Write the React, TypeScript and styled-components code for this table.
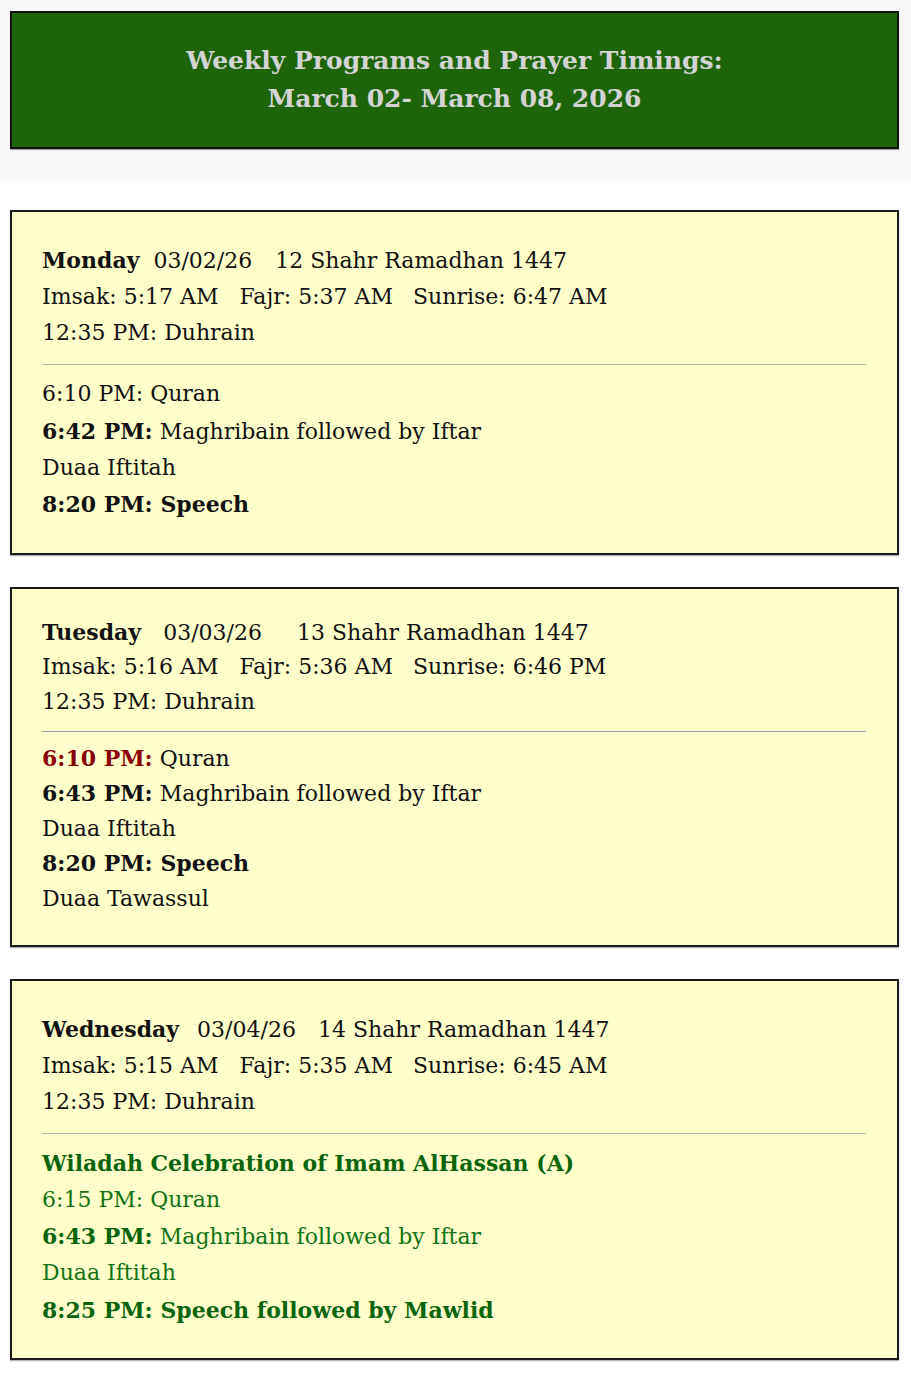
import React from 'react';
import styled, { createGlobalStyle } from 'styled-components';

const GlobalStyle = createGlobalStyle`
  body {
    margin: 0;
    background: #ffffff;
    font-family: "DejaVu Serif", "Liberation Serif", serif;
  }
`;

type Tone = 'normal' | 'green';

interface Program {
  time?: string;
  text: string;
  bold?: 'time' | 'all' | 'none';
  timeColor?: string;
}

interface DayInfo {
  day: string;
  date: string;
  hijri: string;
  gapA: number;
  gapB: number;
  imsak: string;
  fajr: string;
  sunrise: string;
  tone: Tone;
  compact?: boolean;
  heading?: string;
  programs: Program[];
}

const days: DayInfo[] = [
  {
    day: 'Monday',
    date: '03/02/26',
    hijri: '12 Shahr Ramadhan 1447',
    gapA: 14,
    gapB: 23,
    imsak: '5:17 AM',
    fajr: '5:37 AM',
    sunrise: '6:47 AM',
    tone: 'normal',
    programs: [
      { time: '6:10 PM:', text: 'Quran', bold: 'none' },
      { time: '6:42 PM:', text: 'Maghribain followed by Iftar', bold: 'time' },
      { text: 'Duaa Iftitah' },
      { time: '8:20 PM:', text: 'Speech', bold: 'all' },
    ],
  },
  {
    day: 'Tuesday',
    date: '03/03/26',
    hijri: '13 Shahr Ramadhan 1447',
    gapA: 22,
    gapB: 35,
    imsak: '5:16 AM',
    fajr: '5:36 AM',
    sunrise: '6:46 PM',
    tone: 'normal',
    compact: true,
    programs: [
      { time: '6:10 PM:', text: 'Quran', bold: 'time', timeColor: '#8b0000' },
      { time: '6:43 PM:', text: 'Maghribain followed by Iftar', bold: 'time' },
      { text: 'Duaa Iftitah' },
      { time: '8:20 PM:', text: 'Speech', bold: 'all' },
      { text: 'Duaa Tawassul' },
    ],
  },
  {
    day: 'Wednesday',
    date: '03/04/26',
    hijri: '14 Shahr Ramadhan 1447',
    gapA: 18,
    gapB: 22,
    imsak: '5:15 AM',
    fajr: '5:35 AM',
    sunrise: '6:45 AM',
    tone: 'green',
    heading: 'Wiladah Celebration of Imam AlHassan (A)',
    programs: [
      { time: '6:15 PM:', text: 'Quran', bold: 'none' },
      { time: '6:43 PM:', text: 'Maghribain followed by Iftar', bold: 'time' },
      { text: 'Duaa Iftitah' },
      { time: '8:25 PM:', text: 'Speech followed by Mawlid', bold: 'all' },
    ],
  },
];

const HeaderBand = styled.header`
  background: #f9f9f9;
  padding: 11px 12px 31px 10px;
`;

const HeaderBox = styled.div`
  background: #1e640b;
  border: 2px solid #111;
  box-shadow: 0 1px 1px rgba(0, 0, 0, 0.35);
  height: 138px;
  display: flex;
  flex-direction: column;
  align-items: center;
  justify-content: center;
  box-sizing: border-box;
`;

const HeaderLine = styled.div`
  color: #d4d4d4;
  font-size: 25px;
  font-weight: bold;
  line-height: 38px;
  text-align: center;
`;

const CardList = styled.main`
  display: flex;
  flex-direction: column;
  gap: 32px;
  padding: 30px 12px 14px 10px;
`;

const Card = styled.section<{ $compact?: boolean }>`
  --lh: ${(p) => (p.$compact ? '34.5px' : '36.3px')};
  background: #ffffcc;
  border: 2px solid #1a1a1a;
  box-shadow: 0 1px 1px rgba(0, 0, 0, 0.3);
  padding: ${(p) => (p.$compact ? '26px 31px 29px 30px' : '29.5px 31px 29px 30px')};
  font-size: 22px;
  color: #111;
`;

const Line = styled.div<{ $color?: string }>`
  line-height: var(--lh);
  white-space: nowrap;
  color: ${(p) => p.$color || 'inherit'};
`;

const Gap = styled.span<{ $w: number }>`
  display: inline-block;
  width: ${(p) => p.$w}px;
`;

const Strong = styled.b<{ $color?: string }>`
  font-weight: bold;
  color: ${(p) => p.$color || 'inherit'};
`;

const Divider = styled.hr<{ $compact?: boolean }>`
  border: none;
  border-top: 1px solid ${(p) => (p.$compact ? '#9a9cb4' : '#b4b4b4')};
  margin: ${(p) => (p.$compact ? '11.5px 0 9px 0' : '12.5px 0 11.5px 0')};
`;

const Heading = styled.div`
  color: #0a640a;
  font-weight: bold;
  line-height: var(--lh);
`;

const DayCard: React.FC<{ info: DayInfo }> = ({ info }) => {
  const green = info.tone === 'green';
  const bodyColor = green ? '#137313' : undefined;
  const boldColor = green ? '#0a640a' : undefined;
  return (
    <Card $compact={info.compact}>
      <Line>
        <Strong>{info.day}</Strong>
        <Gap $w={info.gapA} />
        {info.date}
        <Gap $w={info.gapB} />
        {info.hijri}
      </Line>
      <Line>
        Imsak: {info.imsak}
        <Gap $w={21} />
        Fajr: {info.fajr}
        <Gap $w={20} />
        Sunrise: {info.sunrise}
      </Line>
      <Line>12:35 PM: Duhrain</Line>
      <Divider $compact={info.compact} />
      {info.heading && <Heading>{info.heading}</Heading>}
      {info.programs.map((p, i) => (
        <Line key={i} $color={bodyColor}>
          {p.time && p.bold === 'all' ? (
            <Strong $color={boldColor}>
              {p.time} {p.text}
            </Strong>
          ) : p.time && p.bold === 'time' ? (
            <>
              <Strong $color={p.timeColor || boldColor}>{p.time}</Strong> {p.text}
            </>
          ) : p.time ? (
            <>
              {p.time} {p.text}
            </>
          ) : (
            p.text
          )}
        </Line>
      ))}
    </Card>
  );
};

const App: React.FC = () => {
  return (
    <>
      <GlobalStyle />
      <HeaderBand>
        <HeaderBox>
          <HeaderLine>Weekly Programs and Prayer Timings:</HeaderLine>
          <HeaderLine>March 02- March 08, 2026</HeaderLine>
        </HeaderBox>
      </HeaderBand>
      <CardList>
        {days.map((d) => (
          <DayCard key={d.day} info={d} />
        ))}
      </CardList>
    </>
  );
};

export default App;
